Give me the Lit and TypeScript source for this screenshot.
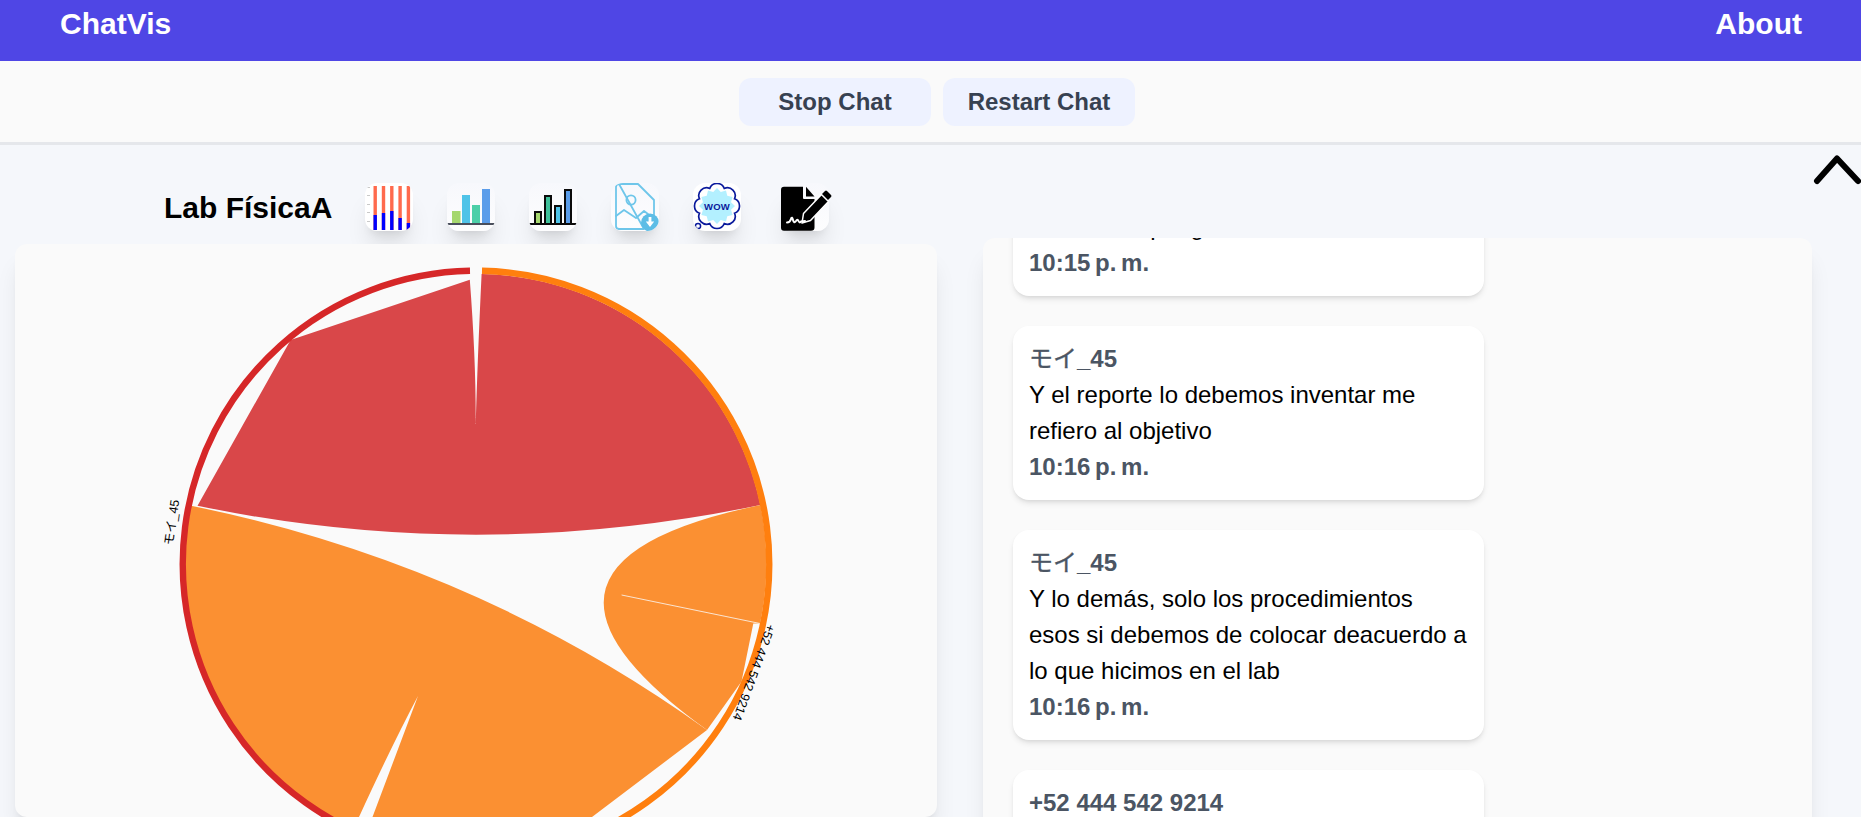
import { LitElement, html, css, svg } from "lit";
import { customElement } from "lit/decorators.js";

const CX = 476.5;
const CY = 564;

function scallop(cx: number, cy: number, r: number, n: number, a: number) {
  let d = "";
  for (let i = 0; i <= n; i++) {
    const t = ((i + 0.5) * 2 * Math.PI) / n;
    const x = (cx + r * Math.cos(t)).toFixed(2);
    const y = (cy + r * Math.sin(t)).toFixed(2);
    d += i === 0 ? `M${x},${y}` : ` A${a},${a} 0 0 1 ${x},${y}`;
  }
  return d + "Z";
}

function star(cx: number, cy: number, ro: number, ri: number, n: number) {
  const p: string[] = [];
  for (let i = 0; i < n * 2; i++) {
    const t = (i * Math.PI) / n;
    const r = i % 2 ? ri : ro;
    p.push(`${(cx + r * Math.cos(t)).toFixed(2)},${(cy + r * Math.sin(t)).toFixed(2)}`);
  }
  return p.join(" ");
}

const icon1 = svg`
  ${[34, 32, 30, 37, 42].map((_, i) => svg`<rect x=${8.5 + i * 8.3} y="3" width="3.4" height="44" fill="#ff6a4d"></rect>`)}
  ${[32, 30, 28, 35, 40].map((t, i) => svg`<rect x=${8.5 + i * 8.3} y=${t} width="3.4" height=${47 - t} fill="#0000ff"></rect>`)}
  ${[4, 12, 21, 29, 38].map((y) => svg`<rect x="2" y=${y} width="3" height="1" fill="#c9c9c9"></rect>`)}
`;
const icon2 = svg`
  <rect x="5" y="28" width="8.5" height="13" fill="#a5d76e"></rect>
  <rect x="15" y="12" width="8" height="29" fill="#4fc3e8"></rect>
  <rect x="25" y="22" width="8" height="19" fill="#4ccfa8"></rect>
  <rect x="35" y="6" width="8" height="35" fill="#5b9dea"></rect>
  <rect x="0" y="40" width="48" height="2" fill="#4a4f5c"></rect>
`;
const icon3 = svg`
  <g stroke="#0b0b0b" stroke-width="2">
    <rect x="6" y="29" width="6" height="12" fill="#a5d76e"></rect>
    <rect x="16" y="13" width="6" height="28" fill="#3fc09a"></rect>
    <rect x="26" y="23" width="6" height="18" fill="#4fc3e8"></rect>
    <rect x="36" y="7" width="6" height="34" fill="#5b9dea"></rect>
  </g>
  <rect x="0" y="40" width="48" height="2" fill="#0b0b0b"></rect>
`;
const icon4 = svg`
  <g fill="none" stroke="#6ec6ea" stroke-width="1.8" stroke-linejoin="round" stroke-linecap="round">
    <path d="M8,1 H27 L43,17 V36 M33,46 H8 Q5,46 5,43 V4 Q5,1 8,1Z"></path>
    <circle cx="20" cy="17" r="4.6"></circle>
    <path d="M5,33 L13,27 L25,35 L33,28 L37,31"></path>
  </g>
  <circle cx="39" cy="39.5" r="9" fill="#5dbde6"></circle>
  <path d="M37.6,34 h2.8 v4.5 h2.8 L39,44 L34.8,38.5 h2.8Z" fill="#fff"></path>
`;
const icon5 = svg`
  <polygon points=${star(24, 23, 18, 14.5, 12)} fill="#b3f0ff"></polygon>
  <path d=${scallop(24, 23, 19, 8, 7.8)} fill="none" stroke="#0a1a9c" stroke-width="1.7"></path>
  <circle cx="5" cy="43" r="2.6" fill="none" stroke="#0a1a9c" stroke-width="1.5"></circle>
  <text x="24" y="27" text-anchor="middle" class="wow">WOW</text>
`;
const icon6 = svg`
  <path d="M3,3.7 H22 V15 Q22,16 23,16 H33.5 V44.5 Q33.5,47.7 30,47.7 H3 Q0,47.7 0,44.5 V7 Q0,3.7 3,3.7Z" fill="#000"></path>
  <path d="M25,3.7 L33.5,13.4 H25Z" fill="#000"></path>
  <path d="M22.5,30.5 L40.5,11.5 L47.5,18.5 L29.5,37.5 L21,40Z" fill="#000" stroke="#fff" stroke-width="1.5" stroke-linejoin="round"></path>
  <path d="M41,11 L44,8 Q45,7 46,8 L50,12 Q51,13 50,14 L47,17Z" fill="#000"></path>
  <path d="M6,39.5 Q9,39.5 10,36 Q11,33 12,37 Q13,41 15,38 Q16.5,35.5 17.5,38 Q18.5,40.5 20,38.5 L24,38" fill="none" stroke="#fff" stroke-width="2" stroke-linecap="round"></path>
`;

@customElement("app-root")
export class AppRoot extends LitElement {
  static styles = css`
    :host {
      display: block;
      height: 817px;
      overflow: hidden;
      background: #f5f7fb;
      font-family: "Liberation Sans", Arial, "Noto Sans CJK JP", sans-serif;
      position: relative;
    }
    .nav {
      height: 61px;
      background: #4f46e5;
      color: #fff;
      display: flex;
      justify-content: space-between;
      padding: 6px 59px 0 60px;
      box-sizing: border-box;
      font-size: 30px;
      font-weight: 700;
      line-height: 36px;
    }
    .controls {
      height: 84px;
      box-sizing: border-box;
      background: #fafafa;
      border-bottom: 3px solid #e5e7eb;
      display: flex;
      justify-content: center;
      gap: 12px;
      padding: 17px 0 0 13px;
    }
    .btn {
      width: 192px;
      height: 48px;
      border: 0;
      border-radius: 12px;
      background: #eef2ff;
      color: #374151;
      font: 700 24px/48px "Liberation Sans", Arial, sans-serif;
      padding: 0;
    }
    .chevron {
      position: absolute;
      left: 1812px;
      top: 151px;
      width: 50px;
      height: 36px;
    }
    .main {
      display: grid;
      grid-template-columns: 922px 829px;
      column-gap: 46px;
      padding-left: 15px;
      height: 672px;
      overflow: hidden;
    }
    .left {
      display: flex;
      flex-direction: column;
      min-height: 0;
    }
    .title-row {
      height: 99px;
      box-sizing: border-box;
      flex: none;
      display: flex;
      align-items: flex-end;
      gap: 34px;
      padding: 0 0 13px 149px;
    }
    .title {
      font-size: 30px;
      font-weight: 700;
      line-height: 36px;
      color: #000;
      align-self: flex-end;
      padding-bottom: 5px;
      margin-right: -1.5px;
    }
    .tile {
      display: block;
      width: 48px;
      height: 48px;
      flex: none;
      border-radius: 12px;
      background: linear-gradient(#f7f8fc, #fdfdfe);
      box-shadow: 0 20px 25px -5px rgba(0, 0, 0, 0.1), 0 8px 10px -6px rgba(0, 0, 0, 0.1);
      overflow: hidden;
    }
    .tile.white {
      background: #fff;
    }
    .tile.last {
      margin-left: 6px;
      overflow: visible;
    }
    .wow {
      font: 900 9.5px "Liberation Sans", Arial, sans-serif;
      fill: #0a1a9c;
      letter-spacing: 0.2px;
    }
    .panel {
      background: #fafafa;
      border-radius: 12px;
      box-shadow: 0 20px 25px -5px rgba(0, 0, 0, 0.1), 0 8px 10px -6px rgba(0, 0, 0, 0.1);
    }
    .chart-panel {
      flex: 1;
      min-height: 0;
      position: relative;
    }
    .chart {
      display: block;
      width: 922px;
      height: 573px;
    }
    .label {
      font: 400 12.5px "Liberation Sans", Arial, "Noto Sans CJK JP", sans-serif;
      fill: #000;
    }
    .right {
      padding-top: 93px;
      min-height: 0;
    }
    .chat-panel {
      height: 700px;
      overflow: hidden;
      padding: 0 30px;
      box-sizing: border-box;
    }
    .msgs {
      display: flex;
      flex-direction: column;
      gap: 30px;
      width: 471px;
      margin-top: -80px;
    }
    .msg {
      background: #fff;
      border-radius: 16px;
      padding: 15px 16px;
      box-shadow: 0 4px 6px -1px rgba(0, 0, 0, 0.1), 0 2px 4px -2px rgba(0, 0, 0, 0.1);
      font-size: 24px;
      line-height: 36px;
      color: #000;
    }
    .who,
    .time {
      font-weight: 700;
      color: #4b5563;
    }
    .time {
      word-spacing: -2px;
    }
    .kana {
      font-weight: 400;
      -webkit-text-stroke: 0.35px #4b5563;
    }
  `;

  render() {
    return html`
      <div class="nav"><span>ChatVis</span><span>About</span></div>
      <div class="controls">
        <button class="btn">Stop Chat</button>
        <button class="btn">Restart Chat</button>
      </div>
      <svg class="chevron" viewBox="0 0 50 36">
        <path d="M5,30 L25,7.5 L46,30" fill="none" stroke="#000" stroke-width="6" stroke-linecap="round" stroke-linejoin="round"></path>
      </svg>
      <div class="main">
        <div class="left">
          <div class="title-row">
            <span class="title">Lab FísicaA</span>
            <svg class="tile white" viewBox="0 0 48 48">${icon1}</svg>
            <svg class="tile" viewBox="0 0 48 48">${icon2}</svg>
            <svg class="tile" viewBox="0 0 48 48">${icon3}</svg>
            <svg class="tile" viewBox="0 0 48 48">${icon4}</svg>
            <svg class="tile white" viewBox="0 0 48 48">${icon5}</svg>
            <svg class="tile last" viewBox="0 0 48 48">${icon6}</svg>
          </div>
          <div class="panel chart-panel">
            <svg class="chart" viewBox="15 244 922 573">
              <path
                d="M481.6,274 A290,290 0 0 1 760.4,505 Q${CX},${CY} 197.5,505.7 L290.6,340 L469.8,279.7 Q476,360 475.7,424 Q477.5,360 481.6,274Z"
                fill="#d94749"
              ></path>
              <path
                d="M191,505.7 A291,291 0 0 0 332,817 L359,817 Q392,745 418,696 L372.5,817 L592,817 L707,730 Q${CX},${CY} 191,505.7Z"
                fill="#fb9032"
              ></path>
              <path
                d="M760.4,505 A290,290 0 0 1 760,623.5 L753.3,623.5 L741.5,681.6 L707,730 Q${CX},${CY} 760.4,505Z"
                fill="#fb9032"
              ></path>
              <path d="M760,623.5 L621.6,595" stroke="#fafafa" stroke-width="0.8" fill="none"></path>
              <path d="M470,270.8 A293.3,293.3 0 0 0 396,846.2" fill="none" stroke="#d62728" stroke-width="6.4"></path>
              <path d="M482,270.8 A293.3,293.3 0 0 1 556,846.2" fill="none" stroke="#ff7f0e" stroke-width="6.4"></path>
              <text class="label" text-anchor="middle" transform="translate(176,523) rotate(-82)">モイ_45</text>
              <text class="label" text-anchor="middle" transform="translate(750,671) rotate(110)">+52 444 542 9214</text>
            </svg>
          </div>
        </div>
        <div class="right">
          <div class="panel chat-panel">
            <div class="msgs">
              <div class="msg">
                <div class="who"><span class="kana">モイ</span>_45</div>
                <div>Para ver si pongo</div>
                <div class="time">10:15 p. m.</div>
              </div>
              <div class="msg">
                <div class="who"><span class="kana">モイ</span>_45</div>
                <div>Y el reporte lo debemos inventar me refiero al objetivo</div>
                <div class="time">10:16 p. m.</div>
              </div>
              <div class="msg">
                <div class="who"><span class="kana">モイ</span>_45</div>
                <div>Y lo demás, solo los procedimientos esos si debemos de colocar deacuerdo a lo que hicimos en el lab</div>
                <div class="time">10:16 p. m.</div>
              </div>
              <div class="msg">
                <div class="who">+52 444 542 9214</div>
              </div>
            </div>
          </div>
        </div>
      </div>
    `;
  }
}
